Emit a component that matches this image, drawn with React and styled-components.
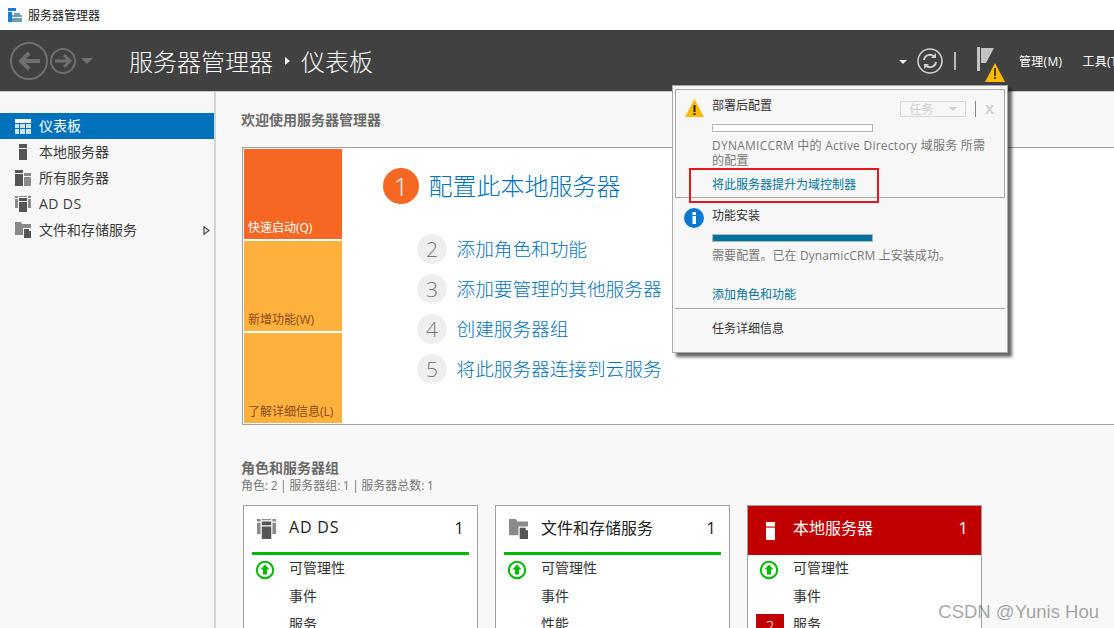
import React from 'react';
import styled, { createGlobalStyle } from 'styled-components';

const GlobalStyle = createGlobalStyle`
  html, body {
    margin: 0;
    padding: 0;
    height: 100%;
    overflow: hidden;
    background: #fff;
  }
`;

const Window = styled.div`
  width: 1114px;
  height: 628px;
  overflow: hidden;
  position: relative;
  font-family: 'Open Sans', 'Noto Sans CJK SC', sans-serif;
`;

const TitleBar = styled.div`
  height: 30px;
  display: flex;
  align-items: center;
  gap: 6px;
  padding-left: 8px;
  background: #fff;
  font-size: 12px;
  color: #1a1a1a;
`;

const Header = styled.header`
  height: 61px;
  background: #414141;
  border-bottom: 1px solid #c8c8c8;
  display: flex;
  align-items: center;
  color: #fff;
  white-space: nowrap;
`;

const NavButtons = styled.div`
  width: 129px;
  flex: none;
  padding-left: 10px;
  box-sizing: border-box;
  display: flex;
  align-items: center;
`;

const Breadcrumb = styled.div`
  flex: 1;
  display: flex;
  align-items: center;
  font-size: 24px;
  font-weight: 300;
  color: #fafafa;
`;

const Chevron = styled.span`
  width: 0;
  height: 0;
  margin: 0 11px 0 12px;
  border-left: 5px solid #eee;
  border-top: 4px solid transparent;
  border-bottom: 4px solid transparent;
`;

const HeaderTools = styled.div`
  width: 215px;
  flex: none;
  display: flex;
  align-items: center;
  font-size: 12px;
  overflow: hidden;
`;

const ToolCaret = styled.span`
  flex: none;
  width: 0;
  height: 0;
  margin-top: 2px;
  border-top: 4px solid #eee;
  border-left: 4px solid transparent;
  border-right: 4px solid transparent;
`;

const ToolDivider = styled.span`
  flex: none;
  width: 2px;
  height: 18px;
  margin-left: 11px;
  background: #b8b8b8;
`;

const ToolSlot = styled.span`
  display: flex;
  flex: none;
  margin-left: ${p => p.$ml}px;
  margin-top: ${p => p.$mt || 0}px;
`;

const ToolLink = styled(ToolSlot)`
  letter-spacing: 0.3px;
`;

const Body = styled.div`
  display: flex;
  height: 536px;
`;

const Sidebar = styled.nav`
  width: 214px;
  flex: none;
  background: #f7f7f7;
  border-right: 2px solid #d4d4d4;
  padding-top: 21px;
`;

const NavItem = styled.div`
  height: 26px;
  display: flex;
  align-items: center;
  position: relative;
  font-size: 14px;
  color: ${p => (p.$active ? '#fff' : '#3c3c3c')};
  background: ${p => (p.$active ? '#0072bc' : 'transparent')};
`;

const NavIcon = styled.span`
  width: 39px;
  flex: none;
  display: flex;
  justify-content: center;
  padding-left: 7px;
  box-sizing: border-box;
`;

const NavLabel = styled.span`
  margin-bottom: 2px;
  letter-spacing: ${p => (p.$latin ? '0.4px' : '0')};
`;

const NavArrow = styled.svg`
  position: absolute;
  right: 4px;
  top: 9px;
`;

const Main = styled.main`
  flex: 1;
  min-width: 0;
  background: #f8f8f8;
  padding: 18px 0 0 26px;
`;

const SectionTitle = styled.h2`
  margin: 0 0 0 -1px;
  font-size: 14px;
  line-height: 20px;
  font-weight: 700;
  color: #6a6a6a;
`;

const QuickStart = styled.section`
  margin-top: 17px;
  height: 278px;
  width: 900px;
  display: flex;
  background: #fff;
  border: 1px solid #a0a0a0;
  border-right: 0;
  box-sizing: border-box;
  padding: 1px 0 1px 1px;
`;

const TileColumn = styled.div`
  width: 98px;
  flex: none;
  display: flex;
  flex-direction: column;
  gap: 2px;
`;

const Tile = styled.div`
  flex: 1;
  background: ${p => (p.$primary ? '#f56722' : '#ffb13d')};
  color: ${p => (p.$primary ? '#fff' : '#8a4a1a')};
  font-size: 12px;
  line-height: 16px;
  display: flex;
  align-items: flex-end;
  padding: 0 0 3px 4px;
`;

const Steps = styled.div`
  padding: 19px 0 0 41px;
`;

const PrimaryStep = styled.div`
  display: flex;
  align-items: center;
  gap: 9.5px;
  font-size: 24px;
  font-weight: 300;
  color: #0072bc;
  height: 36px;
`;

const PrimaryBadge = styled.span`
  width: 36px;
  height: 36px;
  border-radius: 50%;
  background: #f56722;
  color: #fff;
  font-weight: 300;
  font-size: 26px;
  display: flex;
  align-items: center;
  justify-content: center;
`;

const StepList = styled.div`
  margin: 30px 0 0 34px;
  display: flex;
  flex-direction: column;
  gap: 10px;
`;

const Step = styled.div`
  display: flex;
  align-items: center;
  gap: 9.5px;
  height: 30px;
  font-size: 18.65px;
  font-weight: 300;
  color: #0072bc;
  white-space: nowrap;
`;

const StepLabel = styled.span`
  margin-bottom: ${p => p.$lift}px;
`;

const StepBadge = styled.span`
  width: 30px;
  height: 30px;
  border-radius: 50%;
  background: #efefef;
  color: #777;
  font-weight: 300;
  font-size: 21px;
  display: flex;
  align-items: center;
  justify-content: center;
`;

const RolesHeader = styled.div`
  margin-top: 33px;
`;

const RolesSummary = styled.div`
  margin-left: -1px;
  font-size: 12px;
  line-height: 16px;
  word-spacing: -0.6px;
  color: #777;
`;

const Cards = styled.div`
  margin: 11px 0 0 1px;
  display: flex;
  gap: 17px;
`;

const Card = styled.article`
  width: 235px;
  height: 200px;
  flex: none;
  background: #fff;
  border: 1px solid #a0a0a0;
  box-sizing: border-box;
`;

const CardHead = styled.div`
  height: 49px;
  box-sizing: border-box;
  margin: ${p => (p.$alert ? '0' : '0 8px')};
  padding: ${p => (p.$alert ? '0 13px 0 8px' : '0 5px 0 0')};
  background: ${p => (p.$alert ? '#c00000' : 'transparent')};
  border-bottom: ${p => (p.$alert ? '0' : '3px solid #00b900')};
  color: ${p => (p.$alert ? '#fff' : '#222')};
  display: flex;
  align-items: center;
  font-size: 16px;
`;

const CardIcon = styled.span`
  width: 37px;
  flex: none;
  display: flex;
  padding-left: ${p => (p.$alert ? 10 : 5)}px;
  box-sizing: border-box;
`;

const CardName = styled.span`
  flex: 1;
  margin-bottom: ${p => (p.$alert ? 7 : 4)}px;
  letter-spacing: ${p => (p.$latin ? '0.8px' : '0')};
`;

const CardCount = styled.span`
  font-size: 17px;
  margin-bottom: ${p => (p.$alert ? 6 : 3)}px;
`;

const CardRows = styled.div`
  padding-top: 1px;
`;

const CardRow = styled.div`
  height: 28px;
  display: flex;
  align-items: center;
  font-size: 14px;
  color: #333;
`;

const RowLabel = styled.span`
  margin-bottom: 6px;
`;

const RowMark = styled.span`
  width: 45px;
  flex: none;
  display: flex;
  padding-left: 8px;
  box-sizing: border-box;
`;

const OkMark = styled.span`
  display: flex;
  margin-left: 3px;
`;

const CountChip = styled.span`
  width: 28px;
  height: 24px;
  background: #c00000;
  color: #fff;
  display: flex;
  justify-content: center;
  align-items: center;
  font-size: 15px;
  font-weight: 300;
`;

const Popup = styled.aside`
  position: absolute;
  left: 672px;
  top: 85px;
  width: 336px;
  height: 268px;
  background: #f7f7f7;
  border: 1px solid #a8a8a8;
  box-sizing: border-box;
  box-shadow: 4px 4px 3px rgba(0, 0, 0, 0.6);
  font-size: 12px;
  color: #333;
  display: flex;
  flex-direction: column;
`;

const Notice = styled.div`
  position: relative;
  flex: none;
  box-sizing: border-box;
  margin: ${p => (p.$boxed ? '3px 2px 0' : '0 3px')};
  padding: ${p => (p.$boxed ? '8px' : '10px')} 0 0 36px;
  height: ${p => p.$h}px;
  border: ${p => (p.$boxed ? '1px solid #a8a8a8' : '0')};
`;

const NoticeIcon = styled.span`
  position: absolute;
  display: flex;
  left: ${p => p.$left}px;
  top: ${p => p.$top}px;
`;

const NoticeTitle = styled.div`
  line-height: 16px;
  color: #333;
`;

const Progress = styled.div`
  width: 161px;
  height: 8px;
  box-sizing: border-box;
  margin-top: 10px;
  background: ${p => (p.$done ? '#00749c' : '#fff')};
  border: 1px solid #b4b4b4;
`;

const Muted = styled.div`
  margin-top: ${p => p.$mt}px;
  line-height: 15px;
  color: #777;
  white-space: nowrap;
  letter-spacing: ${p => p.$spacing}px;
`;

const TealLink = styled.div`
  color: #00749c;
  line-height: 16px;
  margin-top: ${p => p.$mt}px;
`;

const TaskButtons = styled.div`
  position: absolute;
  right: 10px;
  top: 10px;
  display: flex;
  align-items: center;
  color: #d0d0d0;
`;

const TaskSelect = styled.span`
  width: 66px;
  height: 16px;
  border: 1px solid #d8d8d8;
  box-sizing: border-box;
  display: flex;
  align-items: center;
  justify-content: space-between;
  padding: 0 8px;
  margin-right: 9px;
  &::after {
    content: '';
    border-left: 4px solid transparent;
    border-right: 4px solid transparent;
    border-top: 4px solid #d0d0d0;
  }
`;

const Divider = styled.span`
  width: 1px;
  height: 16px;
  background: #888;
  margin-right: 9px;
`;

const CloseX = styled.span`
  font-weight: 700;
  font-size: 13px;
`;

const PopupFooter = styled.div`
  margin: 0 2px;
  border-top: 1px solid #a8a8a8;
  padding: 12px 0 0 37px;
  line-height: 16px;
`;

const RedBox = styled.div`
  position: absolute;
  left: 689px;
  top: 168px;
  width: 190px;
  height: 35px;
  box-sizing: border-box;
  border: 2px solid #e8141e;
`;

const Watermark = styled.div`
  position: absolute;
  right: 15px;
  top: 601px;
  font-family: 'Liberation Sans', sans-serif;
  font-size: 18.5px;
  line-height: 22px;
  color: rgba(90, 90, 90, 0.55);
`;

const NavArrows = () => (
  <svg width="95" height="40" viewBox="0 0 95 40" fill="none" stroke="#6f6f6f">
    <circle cx="19" cy="20" r="18" strokeWidth="2" />
    <path d="M30 20H11M19 12l-8 8 8 8" strokeWidth="4" />
    <circle cx="53" cy="20" r="12" strokeWidth="2" />
    <path d="M45 20h15M54 14l6 6-6 6" strokeWidth="3" />
    <path d="M71 17h12l-6 6z" fill="#6f6f6f" stroke="none" />
  </svg>
);

const AppIcon = () => (
  <svg width="14" height="14" viewBox="0 0 14 14">
    <rect x="0" y="0" width="8" height="3" fill="#1a7fd0" />
    <rect x="0" y="4" width="4" height="10" fill="#1a7fd0" />
    <rect x="4" y="7" width="10" height="7" fill="#6b9cb8" />
    <rect x="6" y="5" width="6" height="2" fill="#6b9cb8" />
    <rect x="4" y="9" width="10" height="1" fill="#fff" />
  </svg>
);

const GridIcon = () => (
  <svg width="16" height="15" viewBox="0 0 16 15">
    <rect width="16" height="4" fill="#fff" />
    <path d="M0 5h4v4H0zM5 5h5v4H5zM11 5h5v4h-5zM0 10h4v5H0zM5 10h5v5H5zM11 10h5v5h-5z" fill="#cfe3f2" />
  </svg>
);

const ServerIcon = ({ color = '#555', gap = '#f7f7f7', w = 8, h = 16 }) => (
  <svg width={w} height={h} viewBox="0 0 8 16" preserveAspectRatio="none">
    <rect width="8" height="16" fill={color} />
    <rect y="4" width="8" height="1" fill={gap} />
  </svg>
);

const AllServersIcon = () => (
  <svg width="16" height="16" viewBox="0 0 16 16">
    <path d="M0 0h8v3H0zM0 4h8v12H0z" fill="#555" />
    <path d="M9 3h7v3H9zM9 7h7v9H9z" fill="#8a8a8a" />
  </svg>
);

const AdIcon = ({ w = 16, h = 16 }) => (
  <svg width={w} height={h} viewBox="0 0 16 16" preserveAspectRatio="none">
    <path d="M0 0h3v2H0zM0 3h3v9H0zM13 0h3v2h-3zM13 3h3v9h-3zM4 0h8v1H4z" fill="#8a8a8a" />
    <path d="M4 2h8v3H4zM4 6h8v10H4z" fill="#555" />
  </svg>
);

const FilesIcon = ({ w = 16, h = 16 }) => (
  <svg width={w} height={h} viewBox="0 0 16 16" preserveAspectRatio="none">
    <path d="M0 0h6l1 2h9v4H8v7H0z" fill="#8a8a8a" />
    <path d="M9 7h5v2h2v7H9z" fill="#555" />
  </svg>
);

const RefreshIcon = () => (
  <svg width="26" height="26" viewBox="0 0 26 26" fill="none" stroke="#d0d0d0">
    <circle cx="13" cy="13" r="12" strokeWidth="1.6" />
    <path d="M7 12a6 6 0 0 1 10.5-3M19 14a6 6 0 0 1-10.5 3" strokeWidth="2" />
    <path d="M19 5v5h-5zM7 21v-5h5z" fill="#d0d0d0" stroke="none" />
  </svg>
);

const FlagIcon = () => (
  <svg width="28" height="36" viewBox="0 0 28 36">
    <rect x="0" y="0" width="3" height="24" fill="#c4c4c4" />
    <path d="M4 1h13l-8 15H4z" fill="#c4c4c4" />
    <path d="M18 16l10 19H8z" fill="#ffb900" />
    <rect x="17.2" y="21" width="1.6" height="8" fill="#222" />
    <rect x="17.2" y="30" width="1.6" height="2" fill="#222" />
  </svg>
);

const WarnIcon = () => (
  <svg width="19" height="18" viewBox="0 0 19 18">
    <path d="M9.5 0l9.5 18H0z" fill="#ffb900" />
    <rect x="8.5" y="6" width="2" height="7" fill="#222" />
    <rect x="8.5" y="14" width="2" height="2" fill="#222" />
  </svg>
);

const InfoIcon = () => (
  <svg width="20" height="20" viewBox="0 0 20 20">
    <circle cx="10" cy="10" r="10" fill="#0a78d0" />
    <rect x="8.5" y="8" width="3.5" height="8" fill="#fff" />
    <rect x="8.5" y="4" width="3.5" height="3" fill="#fff" />
  </svg>
);

const OkIcon = () => (
  <svg width="20" height="20" viewBox="0 0 20 20" fill="none">
    <circle cx="10" cy="10" r="8.2" stroke="#00b900" strokeWidth="2" />
    <path d="M10 4.5l4.5 5H12v5H8v-5H5.5z" fill="#00b900" />
  </svg>
);

const roleCards = [
  { name: 'AD DS', latin: true, icon: <AdIcon w={19} h={20} />, rows: ['可管理性', '事件', '服务'] },
  { name: '文件和存储服务', icon: <FilesIcon w={19} h={20} />, rows: ['可管理性', '事件', '性能'] },
  { name: '本地服务器', alert: true, icon: <ServerIcon color="#fff" gap="#c00000" w={9} h={18} />, rows: ['可管理性', '事件', '服务'] },
];

const steps = [
  ['2', '添加角色和功能'],
  ['3', '添加要管理的其他服务器'],
  ['4', '创建服务器组'],
  ['5', '将此服务器连接到云服务'],
];

const App = () => (
  <Window>
    <GlobalStyle />
    <TitleBar>
      <AppIcon />
      服务器管理器
    </TitleBar>
    <Header>
      <NavButtons>
        <NavArrows />
      </NavButtons>
      <Breadcrumb>
        服务器管理器
        <Chevron />
        仪表板
      </Breadcrumb>
      <HeaderTools>
        <ToolCaret />
        <ToolSlot $ml={10}><RefreshIcon /></ToolSlot>
        <ToolDivider />
        <ToolSlot $ml={21} $mt={8}><FlagIcon /></ToolSlot>
        <ToolLink $ml={14}>管理(M)</ToolLink>
        <ToolLink $ml={20}>工具(T)</ToolLink>
      </HeaderTools>
    </Header>
    <Body>
      <Sidebar>
        <NavItem $active>
          <NavIcon><GridIcon /></NavIcon>
          <NavLabel>仪表板</NavLabel>
        </NavItem>
        <NavItem>
          <NavIcon><ServerIcon /></NavIcon>
          <NavLabel>本地服务器</NavLabel>
        </NavItem>
        <NavItem>
          <NavIcon><AllServersIcon /></NavIcon>
          <NavLabel>所有服务器</NavLabel>
        </NavItem>
        <NavItem>
          <NavIcon><AdIcon /></NavIcon>
          <NavLabel $latin>AD DS</NavLabel>
        </NavItem>
        <NavItem>
          <NavIcon><FilesIcon /></NavIcon>
          <NavLabel>文件和存储服务</NavLabel>
          <NavArrow width="7" height="9" viewBox="0 0 7 9">
            <path d="M1 .8v7.4L6 4.500z" fill="none" stroke="#444" strokeWidth="1.2" />
          </NavArrow>
        </NavItem>
      </Sidebar>
      <Main>
        <SectionTitle>欢迎使用服务器管理器</SectionTitle>
        <QuickStart>
          <TileColumn>
            <Tile $primary>快速启动(Q)</Tile>
            <Tile>新增功能(W)</Tile>
            <Tile>了解详细信息(L)</Tile>
          </TileColumn>
          <Steps>
            <PrimaryStep>
              <PrimaryBadge>1</PrimaryBadge>
              <StepLabel $lift={3}>配置此本地服务器</StepLabel>
            </PrimaryStep>
            <StepList>
              {steps.map(([num, label]) => (
                <Step key={num}>
                  <StepBadge>{num}</StepBadge>
                  <StepLabel $lift={4}>{label}</StepLabel>
                </Step>
              ))}
            </StepList>
          </Steps>
        </QuickStart>
        <RolesHeader>
          <SectionTitle>角色和服务器组</SectionTitle>
          <RolesSummary>角色: 2 | 服务器组: 1 | 服务器总数: 1</RolesSummary>
        </RolesHeader>
        <Cards>
          {roleCards.map(card => (
            <Card key={card.name}>
              <CardHead $alert={card.alert}>
                <CardIcon $alert={card.alert}>{card.icon}</CardIcon>
                <CardName $latin={card.latin} $alert={card.alert}>{card.name}</CardName>
                <CardCount $alert={card.alert}>1</CardCount>
              </CardHead>
              <CardRows>
                {card.rows.map((row, i) => (
                  <CardRow key={row}>
                    <RowMark>
                      {i === 0 && <OkMark><OkIcon /></OkMark>}
                      {card.alert && i === 2 && <CountChip>2</CountChip>}
                    </RowMark>
                    <RowLabel>{row}</RowLabel>
                  </CardRow>
                ))}
              </CardRows>
            </Card>
          ))}
        </Cards>
      </Main>
    </Body>
    <Popup>
      <Notice $boxed $h={109}>
        <NoticeIcon $left={9} $top={9}><WarnIcon /></NoticeIcon>
        <NoticeTitle>部署后配置</NoticeTitle>
        <TaskButtons>
          <TaskSelect>任务</TaskSelect>
          <Divider />
          <CloseX>X</CloseX>
        </TaskButtons>
        <Progress />
        <Muted $mt={6} $spacing={0.25}>
          DYNAMICCRM 中的 Active Directory 域服务 所需
          <br />
          的配置
        </Muted>
        <TealLink $mt={9}>将此服务器提升为域控制器</TealLink>
      </Notice>
      <Notice $h={110}>
        <NoticeIcon $left={8} $top={10}><InfoIcon /></NoticeIcon>
        <NoticeTitle>功能安装</NoticeTitle>
        <Progress $done />
        <Muted $mt={6} $spacing={0.1}>需要配置。已在 DynamicCRM 上安装成功。</Muted>
        <TealLink $mt={24}>添加角色和功能</TealLink>
      </Notice>
      <PopupFooter>任务详细信息</PopupFooter>
    </Popup>
    <RedBox />
    <Watermark>CSDN @Yunis Hou</Watermark>
  </Window>
);

export default App;
